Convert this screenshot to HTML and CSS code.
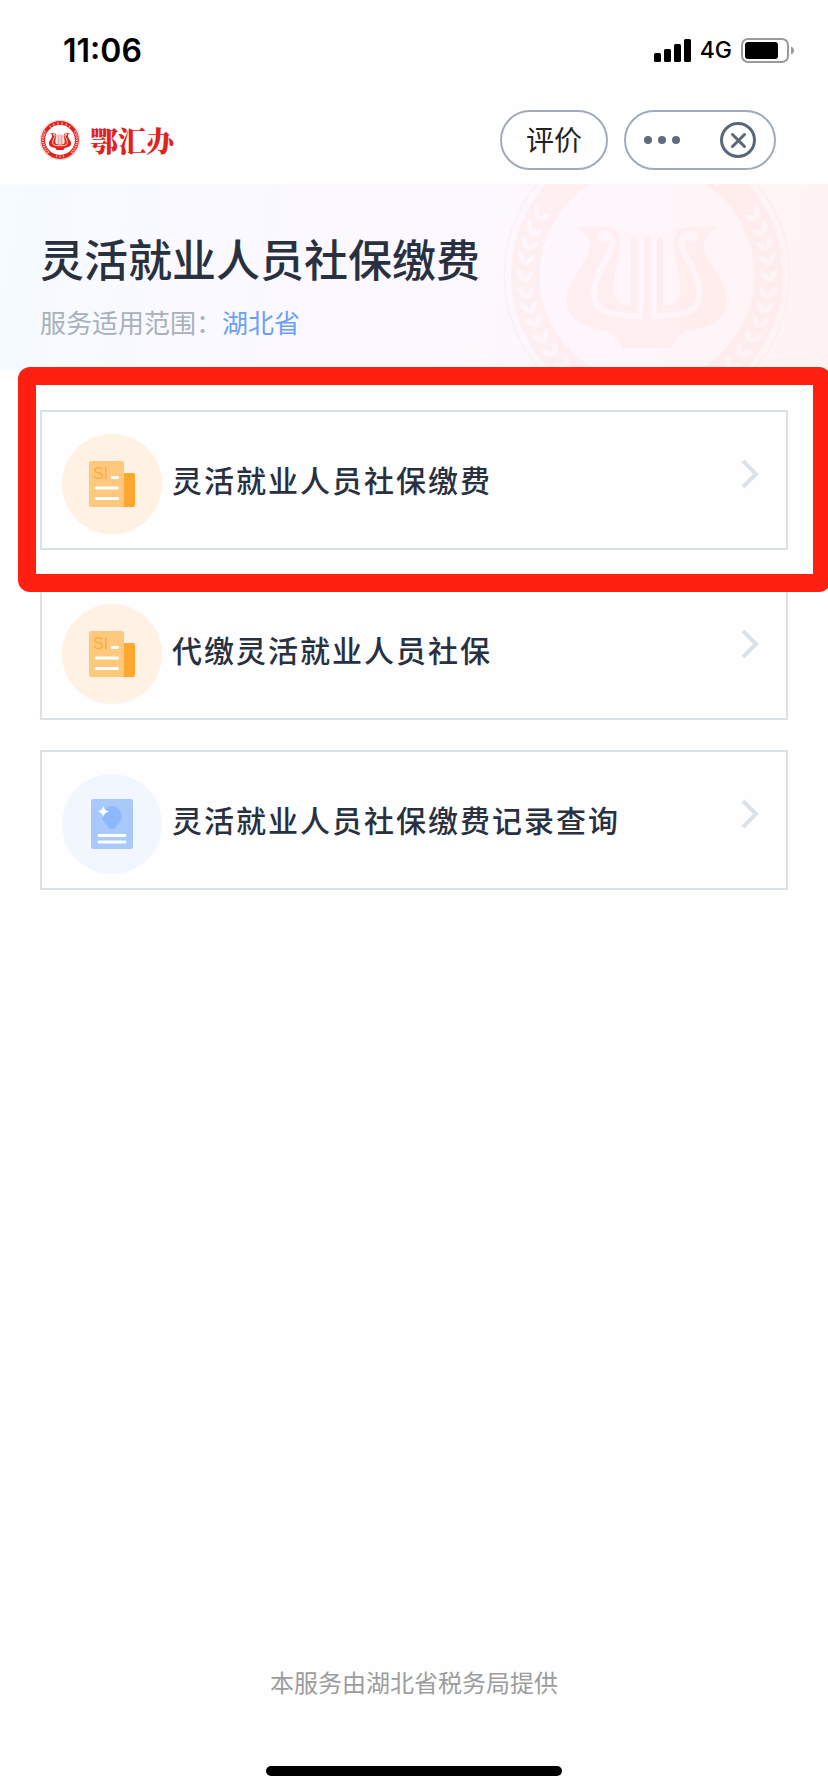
FILE: index.html
```html
<!DOCTYPE html>
<html lang="zh-CN">
<head>
<meta charset="utf-8">
<meta name="viewport" content="width=device-width, initial-scale=1">
<title>灵活就业人员社保缴费</title>
<link rel="stylesheet" href="styles.css">
</head>
<body>
<svg class="defs" width="0" height="0" aria-hidden="true">
  <defs>
    <mask id="lyre-cut" maskUnits="userSpaceOnUse" x="-432" y="-432" width="864" height="864">
      <rect x="-432" y="-432" width="864" height="864" fill="#fff"/>
      <g id="neck" fill="none" stroke="#000" stroke-width="18">
        <path d="M-130-122C-104-124-98-104-108-78C-122-38-158-4-158 58C-156 108-118 124-12 124"/>
        <circle cx="-132" cy="-117" r="19" fill="#000" stroke="none"/>
      </g>
      <use href="#neck" transform="scale(-1 1)"/>
      <path d="M-21-150V130M19-150V130" stroke="#000" stroke-width="18"/>
    </mask>
    <symbol id="lyre" viewBox="-432 -432 864 864">
      <g mask="url(#lyre-cut)">
        <path d="M-212-145H-130C-96-145-80-130-80-95C-80-50-100-15-100 42C-100 78-82 92-49 92V-112L-39-117L-30-112V92H30V-112L39-117L49-112V92C82 92 100 78 100 42C100-15 80-50 80-95C80-130 96-145 130-145H212C186-128 170-114 172-86C174-30 240 6 240 78C236 140 190 154 118 168C96 176 80 196 76 218H-76C-80 196-96 176-118 168C-190 154-236 140-240 78C-240 6-174-30-172-86C-170-114-186-128-212-145Z"/>
        <path d="M-10-117H10V140H-10Z"/>
      </g>
    </symbol>
    <g id="leaf">
      <ellipse cx="-380" cy="0" rx="8" ry="20" transform="rotate(-30 -380 0)"/>
      <ellipse cx="-355" cy="6" rx="8" ry="20" transform="rotate(40 -355 6)"/>
    </g>
    <g id="branch">
      <use href="#leaf" transform="rotate(30)"/><use href="#leaf" transform="rotate(22)"/>
      <use href="#leaf" transform="rotate(15)"/><use href="#leaf" transform="rotate(8)"/>
      <use href="#leaf"/><use href="#leaf" transform="rotate(-8)"/>
      <use href="#leaf" transform="rotate(-15)"/><use href="#leaf" transform="rotate(-22)"/>
      <use href="#leaf" transform="rotate(-30)"/><use href="#leaf" transform="rotate(-38)"/>
      <use href="#leaf" transform="rotate(-46)"/>
    </g>
    <g id="ring-mark">
      <path d="M-18-370H18M0-384V-346M-14-346H14M-14-358L14-334" fill="none" stroke="#000" stroke-width="7"/>
    </g>
    <mask id="ring-cut" maskUnits="userSpaceOnUse" x="-432" y="-432" width="864" height="864">
      <rect x="-432" y="-432" width="864" height="864" fill="#fff"/>
      <use href="#branch"/>
      <use href="#branch" transform="scale(-1 1)"/>
      <use href="#ring-mark" transform="rotate(-36)"/><use href="#ring-mark" transform="rotate(-22)"/>
      <use href="#ring-mark" transform="rotate(-7)"/><use href="#ring-mark" transform="rotate(7)"/>
      <use href="#ring-mark" transform="rotate(22)"/><use href="#ring-mark" transform="rotate(36)"/>
      <use href="#ring-mark" transform="rotate(168)"/><use href="#ring-mark" transform="rotate(180)"/>
      <use href="#ring-mark" transform="rotate(192)"/>
    </mask>
    <symbol id="seal" viewBox="-432 -432 864 864">
      <circle r="428" fill="none" stroke="currentColor" stroke-width="5"/>
      <circle r="365" fill="none" stroke="currentColor" stroke-width="86" mask="url(#ring-cut)"/>
      <use href="#lyre" x="-432" y="-432" width="864" height="864" fill="currentColor"/>
    </symbol>
    <symbol id="bill" viewBox="0 0 100 100">
      <path d="M60 39H71Q73 39 73 41V71Q73 73 71 73H60Z" fill="#ffa72e"/>
      <rect x="27" y="27" width="35" height="46" rx="2" fill="#ffc97d"/>
      <text class="bill-text" x="31" y="45">SI</text>
      <path d="M50 43.500H55.500M34 54H55.500M34 64.500H55.500" stroke="#fff" stroke-width="2.800" stroke-linecap="round"/>
    </symbol>
    <symbol id="record" viewBox="0 0 100 100">
      <rect x="29" y="25" width="42" height="50" rx="2" fill="#a9c9fb"/>
      <path d="M50 32A10.300 10.300 0 0 1 54 51.500V53Q54 55 52 55H48Q46 55 46 53V51.500A10.300 10.300 0 0 1 50 32Z" fill="#8cb8fc"/>
      <path d="M41.300 32Q42.300 36.500 46.800 37.500Q42.300 38.500 41.300 43Q40.300 38.500 35.800 37.500Q40.300 36.500 41.300 32Z" fill="#fff"/>
      <path d="M37 61.500H63M37 68H63" stroke="#fff" stroke-width="2.800" stroke-linecap="round"/>
    </symbol>
    <symbol id="chevron" viewBox="0 0 18 30">
      <path d="M2 2L15 15L2 28" fill="none" stroke="#dbe1e6" stroke-width="4"/>
    </symbol>
  </defs>
</svg>

<div class="page">
  <div class="status">
    <span class="time">11:06</span>
    <div class="indicators">
      <svg class="signal" viewBox="0 0 37 23" aria-hidden="true">
        <rect x="0" y="14" width="7" height="9" rx="1.500"/><rect x="10" y="10" width="7" height="13" rx="1.500"/>
        <rect x="20" y="5" width="7" height="18" rx="1.500"/><rect x="30" y="0" width="7" height="23" rx="1.500"/>
      </svg>
      <span class="network">4G</span>
      <svg class="battery" viewBox="0 0 53 25" aria-hidden="true">
        <rect x="1" y="1" width="46" height="23" rx="6" fill="none" stroke="#9a9a9a" stroke-width="2"/>
        <rect x="4" y="4" width="33" height="17" rx="3"/>
        <path d="M50 8.500Q53 9.500 53 12.500Q53 15.500 50 16.500Z" fill="#9a9a9a"/>
      </svg>
    </div>
  </div>

  <header class="topbar">
    <div class="brand">
      <svg class="brand-seal" aria-hidden="true"><use href="#seal"/></svg>
      <span class="brand-name">鄂汇办</span>
    </div>
    <div class="actions">
      <button class="pill rate" type="button">评价</button>
      <div class="pill capsule">
        <button class="icon-button" type="button" aria-label="更多">
          <svg width="36" height="8" viewBox="0 0 36 8"><g fill="#616b7e"><circle cx="4" cy="4" r="4"/><circle cx="18" cy="4" r="4"/><circle cx="32" cy="4" r="4"/></g></svg>
        </button>
        <button class="icon-button" type="button" aria-label="关闭">
          <svg width="36" height="36" viewBox="0 0 36 36" fill="none" stroke="#5c667a" stroke-width="3" stroke-linecap="round"><circle cx="18" cy="18" r="16.500"/><path d="M12.500 12.500L24.500 24.500M24.500 12.500L12.500 24.500"/></svg>
        </button>
      </div>
    </div>
  </header>

  <section class="hero">
    <svg class="hero-seal" aria-hidden="true"><use href="#seal"/></svg>
    <h1 class="title">灵活就业人员社保缴费</h1>
    <p class="scope">服务适用范围：<span class="region">湖北省</span></p>
  </section>

  <main class="services">
    <a class="card" href="#pay">
      <svg class="card-icon orange" aria-hidden="true"><use href="#bill"/></svg>
      <span class="card-name">灵活就业人员社保缴费</span>
      <svg class="chevron" aria-hidden="true"><use href="#chevron"/></svg>
    </a>
    <a class="card" href="#pay-for-others">
      <svg class="card-icon orange" aria-hidden="true"><use href="#bill"/></svg>
      <span class="card-name">代缴灵活就业人员社保</span>
      <svg class="chevron" aria-hidden="true"><use href="#chevron"/></svg>
    </a>
    <a class="card" href="#records">
      <svg class="card-icon blue" aria-hidden="true"><use href="#record"/></svg>
      <span class="card-name">灵活就业人员社保缴费记录查询</span>
      <svg class="chevron" aria-hidden="true"><use href="#chevron"/></svg>
    </a>
    <div class="highlight"></div>
  </main>

  <footer class="footer">
    <p class="provider">本服务由湖北省税务局提供</p>
    <div class="home-bar"></div>
  </footer>
</div>
</body>
</html>
```
FILE: styles.css
```css
* {
  box-sizing: border-box;
}

body {
  margin: 0;
  background: #fefefe;
  color: #293040;
  font-family: "Liberation Sans", "Noto Sans CJK SC", sans-serif;
}

.defs {
  position: absolute;
}

.page {
  display: flex;
  flex-direction: column;
  min-height: 100vh;
  overflow: hidden;
}

.status {
  display: flex;
  align-items: center;
  justify-content: space-between;
  height: 100px;
  padding: 0 34px 0 63px;
  color: #000;
  font-family: Inter, sans-serif;
}

.time {
  font-size: 32px;
  font-weight: 600;
}

.indicators {
  display: flex;
  align-items: center;
  gap: 9px;
}

.signal {
  width: 37px;
  height: 23px;
}

.network {
  font-size: 23px;
  font-weight: 500;
}

.battery {
  width: 53px;
  height: 25px;
}

.topbar {
  display: flex;
  align-items: center;
  justify-content: space-between;
  padding: 10px 52px 14px 40px;
}

.brand {
  display: flex;
  align-items: center;
  gap: 10px;
  color: #df231c;
}

.brand-seal {
  width: 40px;
  height: 40px;
}

.brand-name {
  font-family: "Noto Serif CJK SC", "Noto Sans CJK SC", serif;
  font-size: 28px;
  font-weight: 900;
  line-height: 40px;
}

.actions {
  display: flex;
  gap: 16px;
}

.pill {
  height: 60px;
  border: 2px solid #a1abb9;
  border-radius: 30px;
  background: #fff;
}

.rate {
  padding: 0 24px 2px;
  color: #222;
  font-family: "Noto Sans CJK SC", sans-serif;
  font-size: 28px;
  font-weight: 400;
}

.capsule {
  display: flex;
  align-items: center;
  justify-content: space-between;
  width: 152px;
  padding: 0 18px;
}

.icon-button {
  display: flex;
  padding: 0;
  border: 0;
  background: none;
}

.hero {
  position: relative;
  height: 186px;
  padding: 48px 40px 0;
  overflow: hidden;
  background: linear-gradient(100deg, #f5fbff 0%, #faf9ff 25%, #fdf8ff 55%, #fff5fa 78%, #fff3f3 100%);
}

.hero-seal {
  position: absolute;
  top: -53px;
  right: 37px;
  width: 288px;
  height: 288px;
  color: #ffe2de;
  opacity: 0.36;
}

.title {
  position: relative;
  margin: 0;
  font-size: 44px;
  font-weight: 500;
  line-height: 60px;
}

.scope {
  position: relative;
  margin: 14px 0 0;
  color: #a9b1bc;
  font-size: 26px;
  font-weight: 400;
  line-height: 36px;
}

.region {
  color: #6ba1f5;
}

.services {
  position: relative;
  display: flex;
  flex-direction: column;
  gap: 30px;
  padding: 40px;
}

.card {
  display: flex;
  align-items: center;
  height: 140px;
  padding: 0 27px 0 20px;
  border: 2px solid #dbe1e6;
  color: #293040;
  text-decoration: none;
}

.card-icon {
  width: 100px;
  height: 100px;
  margin-top: 8px;
  border-radius: 50%;
}

.orange {
  background: #fff2e4;
}

.blue {
  background: #f1f6ff;
}

.bill-text {
  fill: #ffae3d;
  font-family: "Liberation Sans", sans-serif;
  font-size: 16px;
}

.card-name {
  flex: 1;
  margin-left: 10px;
  padding-bottom: 2px;
  font-size: 30px;
  font-weight: 500;
  letter-spacing: 2px;
}

.chevron {
  width: 18px;
  height: 30px;
  margin-bottom: 12px;
}

.highlight {
  position: absolute;
  top: -3px;
  right: -3px;
  left: 18px;
  height: 225px;
  border: 18px solid #ff2012;
  border-radius: 12px;
  pointer-events: none;
}

.footer {
  display: flex;
  flex-direction: column;
  align-items: center;
  gap: 64px;
  margin-top: auto;
  padding-bottom: 16px;
}

.provider {
  margin: 0;
  color: #9c9c9c;
  font-size: 24px;
  font-weight: 400;
  line-height: 36px;
}

.home-bar {
  width: 296px;
  height: 10px;
  border-radius: 5px;
  background: #000;
}
```
